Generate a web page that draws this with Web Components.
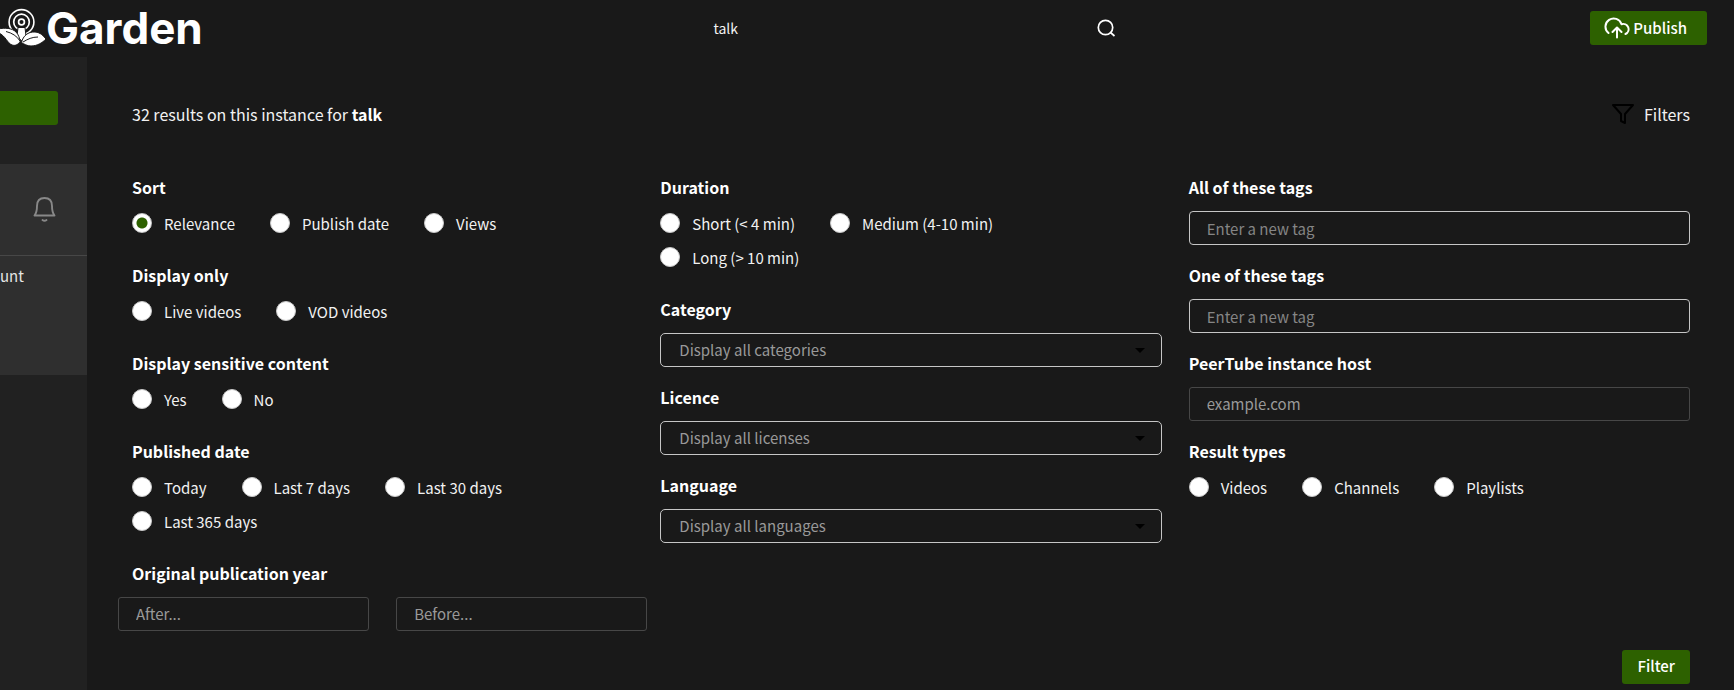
<!DOCTYPE html>
<html lang="en">
<head>
<meta charset="utf-8">
<title>Garden</title>
<style>
body { margin: 0; background: #191919; color: #f2f2f2; font-family: "Noto Sans CJK SC", "Noto Sans", sans-serif; font-size: 15px; line-height: 22px; }
</style>
</head>
<body>
<garden-app></garden-app>
<script>
const define = (name, html, setup) => customElements.define(name, class extends HTMLElement {
  constructor() {
    super();
    const t = document.createElement('template');
    t.innerHTML = '<style>*{box-sizing:border-box}button,input,select{font:inherit;color:inherit;margin:0}</style>' + html;
    this.attachShadow({ mode: 'open' }).append(t.content.cloneNode(true));
  }
  connectedCallback() { if (setup && !this.ready) { this.ready = true; setup(this, this.shadowRoot); } }
});

define('garden-button', `<style>
:host{display:inline-block}
button{display:flex;align-items:center;gap:3px;height:34px;padding:0 15px 2px;border:0;border-radius:3px;background:#2d6100;color:#fff;font-weight:500}
:host([wide]) button{padding:0 20px 0 14px}
</style><button type="button"><slot name="icon"></slot><slot></slot></button>`);

define('garden-header', `<style>
:host{display:block}
header{display:flex;align-items:center;justify-content:space-between;height:56px;padding-right:27px}
a{display:flex;align-items:center;color:#fff;text-decoration:none;font:700 44px/56px Inter,Lato,sans-serif}
form{display:flex;align-items:center;width:440px;padding-left:37px}
input{flex:1;min-width:0;height:34px;padding:0;border:0;outline:0;background:none;font-size:14px}
form button{display:flex;padding:0;border:0;background:none}
svg{display:block;flex:none}
</style>
<header>
<a href="#"><svg width="46" height="56" viewBox="0 0 46 56" fill="none" stroke="#fff">
<circle cx="21.500" cy="22" r="12.400" stroke-width="1.600"/><circle cx="21.500" cy="22" r="7.800" stroke-width="1.700"/><circle cx="21.500" cy="22" r="2.900" stroke-width="1.700"/>
<path d="M18 27.500h7L26 36 21.500 41 17 36Z" fill="#fff" stroke="#191919" stroke-width="1"/>
<path d="M-2 29C5 27.500 12 28 16 32 19 35 19 38 20.500 41 18 45 15 46 12 45 7 43 6 36-2 32.500Z" fill="#fff" stroke="#191919" stroke-width="1"/>
<path d="M21.500 42.500C23 36 28 31.500 35 32 41 32.500 43 36 46 39 42 43 37 46 31 46 27 46 24 44 21.500 42.500Z" fill="#fff" stroke="#191919" stroke-width="1"/>
<path d="M6 31.500C12 33 17 36 20 41M23 42C28 39 32 37 38 37" stroke="#191919" stroke-width="1"/>
</svg><span>Garden</span></a>
<form role="search"><input type="text" value="talk" aria-label="Search"><button type="button" aria-label="Search">
<svg width="20" height="20" viewBox="0 0 20 20" fill="none" stroke="#fff" stroke-width="1.700"><circle cx="9.500" cy="9.500" r="7.200"/><path d="M14.500 14.500 18.500 18"/></svg></button></form>
<garden-button wide><svg slot="icon" width="26" height="24" viewBox="0 0 26 24" fill="none" stroke="#fff" stroke-width="2" stroke-linecap="round" stroke-linejoin="round"><path d="M4.500 17A8.200 8.200 0 1 1 17.500 8.200 5.300 5.300 0 0 1 21.500 18M13 21.500V12M8.500 16 13 11.500 17.500 16"/></svg>Publish</garden-button>
</header>`);

define('garden-sidebar', `<style>
:host{display:block;background:#212121;padding-top:34px;overflow:hidden}
button{display:block;border:0;padding:0}
.login{width:58px;height:34px;background:#2d6100;border-radius:0 3px 3px 0}
.panel{margin-top:39px;height:211px;background:#2f2f2f}
.bell{width:100%;height:92px;padding:0 0 2px 32px;background:none;border-bottom:1px solid #474747;display:flex;align-items:center}
a{display:block;margin-top:9px;color:#e4e4e4;text-decoration:none}
</style>
<button class="login" type="button" aria-label="Main action"></button>
<div class="panel"><button class="bell" type="button" aria-label="Notifications"><svg width="25" height="28" viewBox="0 0 25 28" fill="none" stroke="#888" stroke-width="1.900" stroke-linecap="round" stroke-linejoin="round"><path d="M2.500 20.500H22.500C20.500 18 20 16 20 11 20 6 17.500 3 12.500 3S5 6 5 11C5 16 4.500 18 2.500 20.500ZM10.500 25q2 1.600 4 0"/></svg></button><a href="#">unt</a></div>`);

define('filter-group', `<style>
:host{display:block}
fieldset{border:0;margin:0;padding:0;min-width:0}
.t{display:block;padding:0;height:22px;font-size:16px;font-weight:700;color:#fff;float:left;width:100%}
.body{clear:both;padding:13px 0 19px}
:host([radios]) .body{padding:8px 0 24px}
</style><fieldset><legend class="t"></legend><div class="body"><slot></slot></div></fieldset>`,
(h, r) => r.querySelector('legend').textContent = h.getAttribute('heading'));

define('radio-list', `<style>
:host{display:flex;flex-wrap:wrap;column-gap:35px}
label{display:flex;align-items:center;gap:12px;height:34px;white-space:nowrap}
span{padding-top:2px}
input{appearance:none;width:20px;height:20px;border:1px solid #c8c8c8;border-radius:50%;background:#fff}
input:checked{background:radial-gradient(circle,#2d6100 5px,#fff 6px)}
</style>`,
(h, r) => h.getAttribute('options').split('|').forEach((o, i) => {
  const label = document.createElement('label'), input = document.createElement('input'), span = document.createElement('span');
  input.type = 'radio'; input.name = 'choice';
  input.checked = h.hasAttribute('first') && i === 0;
  span.textContent = o;
  label.append(input, span);
  r.append(label);
}));

define('text-field', `<style>
:host{display:block}
input{display:block;width:100%;height:34px;padding:0 17px 2px;border:1px solid #474747;border-radius:3px;background:none;outline:0}
:host([tag]) input{border-color:#c6c6c6;border-radius:4px;padding-bottom:0}
input::placeholder{color:#999;opacity:1}
:host([tag]) input::placeholder{color:#858585}
</style><input type="text">`,
(h, r) => { const i = r.querySelector('input'); i.placeholder = h.getAttribute('placeholder'); i.setAttribute('aria-label', h.getAttribute('label')); });

define('select-field', `<style>
:host{display:block;position:relative}
select{appearance:none;display:block;width:100%;height:34px;padding:0 18px 1px;border:1px solid #c6c6c6;border-radius:5px;background:#191919;color:#999}
svg{position:absolute;right:17px;top:15px;pointer-events:none}
</style><select><option></option></select><svg width="10" height="5" viewBox="0 0 10 5"><path d="M0 0H10L5 5Z" fill="#000"/></svg>`,
(h, r) => { r.querySelector('option').textContent = h.getAttribute('placeholder'); r.querySelector('select').setAttribute('aria-label', h.getAttribute('label')); });

define('search-filters', `<style>
:host{display:block}
.cols{display:grid;grid-template-columns:repeat(3,minmax(0,1fr));gap:27px}
.years{display:grid;grid-template-columns:1fr 1fr;gap:27px;margin:0 -14px}
.foot{display:flex;justify-content:flex-end}
</style>
<div class="cols">
<div>
<filter-group radios heading="Sort"><radio-list first options="Relevance|Publish date|Views"></radio-list></filter-group>
<filter-group radios heading="Display only"><radio-list options="Live videos|VOD videos"></radio-list></filter-group>
<filter-group radios heading="Display sensitive content"><radio-list options="Yes|No"></radio-list></filter-group>
<filter-group radios heading="Published date"><radio-list options="Today|Last 7 days|Last 30 days|Last 365 days"></radio-list></filter-group>
<filter-group heading="Original publication year"><div class="years"><text-field label="After" placeholder="After..."></text-field><text-field label="Before" placeholder="Before..."></text-field></div></filter-group>
</div>
<div>
<filter-group radios heading="Duration"><radio-list options="Short (&lt; 4 min)|Medium (4-10 min)|Long (&gt; 10 min)"></radio-list></filter-group>
<filter-group heading="Category"><select-field label="Category" placeholder="Display all categories"></select-field></filter-group>
<filter-group heading="Licence"><select-field label="Licence" placeholder="Display all licenses"></select-field></filter-group>
<filter-group heading="Language"><select-field label="Language" placeholder="Display all languages"></select-field></filter-group>
</div>
<div>
<filter-group heading="All of these tags"><text-field tag label="All of these tags" placeholder="Enter a new tag"></text-field></filter-group>
<filter-group heading="One of these tags"><text-field tag label="One of these tags" placeholder="Enter a new tag"></text-field></filter-group>
<filter-group heading="PeerTube instance host"><text-field label="PeerTube instance host" placeholder="example.com"></text-field></filter-group>
<filter-group radios heading="Result types"><radio-list options="Videos|Channels|Playlists"></radio-list></filter-group>
</div>
</div>
<div class="foot"><garden-button>Filter</garden-button></div>`);

define('garden-app', `<style>
:host{display:grid;grid-template-columns:87px minmax(0,1fr);grid-template-rows:57px auto;min-height:100vh}
garden-header{grid-column:1/3}
main{padding:46px 44px 6px 45px}
.top{display:flex;justify-content:space-between;align-items:center;height:22px;margin-bottom:51px;font-size:16px}
.top button{display:flex;align-items:center;gap:10px;padding:0;border:0;background:none}
b{color:#fff}
</style>
<garden-header></garden-header>
<garden-sidebar></garden-sidebar>
<main>
<div class="top"><div>32 results on this instance for <b>talk</b></div>
<button type="button"><svg width="22" height="22" viewBox="0 0 22 22" fill="none" stroke="#000" stroke-width="2" stroke-linejoin="round"><path d="M1 2H21L13 11V20L9 18V11Z"/></svg>Filters</button></div>
<search-filters></search-filters>
</main>`);
</script>
</body>
</html>
